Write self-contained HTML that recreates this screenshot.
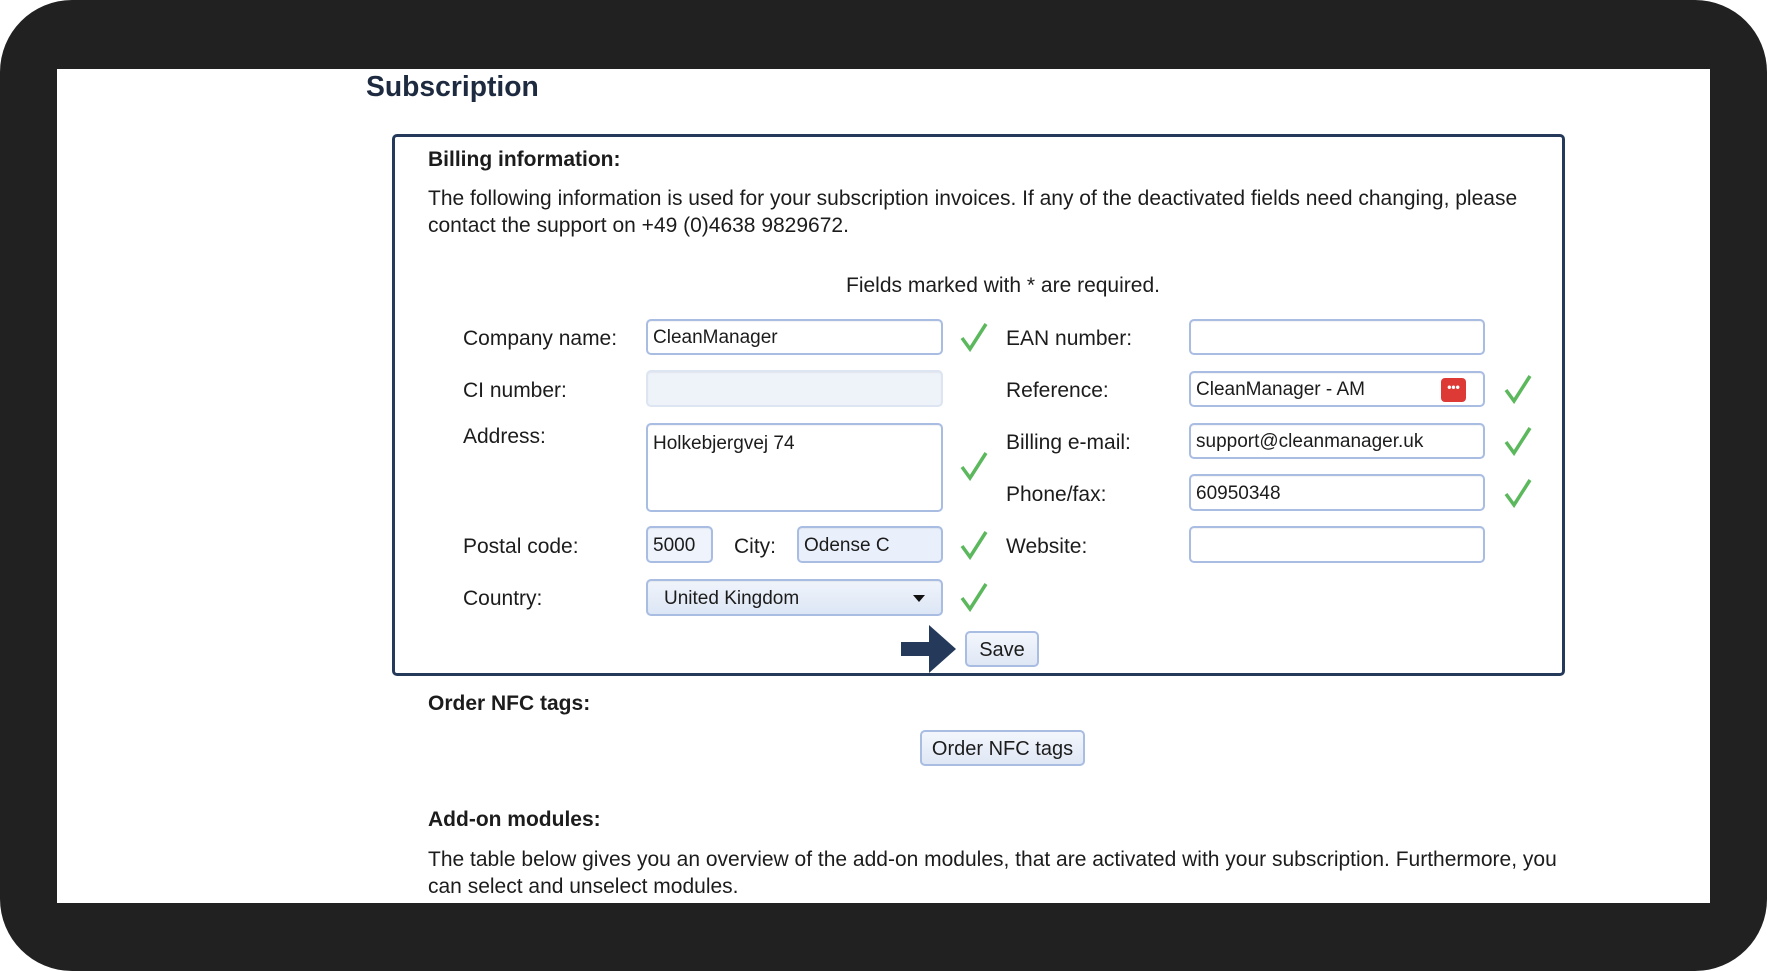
<!DOCTYPE html>
<html><head><meta charset="utf-8"><style>
*{margin:0;padding:0;box-sizing:border-box}
html,body{width:1767px;height:971px;background:#fff;overflow:hidden;font-family:"Liberation Sans",Arial,sans-serif;color:#1c1c1c}
#frame{position:absolute;left:0;top:0;width:1767px;height:971px;background:#222122;border-radius:72px}
#white{position:absolute;left:57px;top:69px;width:1653px;height:834px;background:#fff}
.a{position:absolute;white-space:nowrap}
.t{font-size:21px;transform-origin:left center}
.h{font-weight:bold;font-size:21px;transform-origin:left center}
.in{position:absolute;border:2px solid #a9bde3;border-radius:5px;background:#fff;font-size:19px;padding-left:5px;padding-top:2px;display:flex;align-items:center;box-shadow:inset 0 1px 1px rgba(0,0,0,.05)}
.ck{position:absolute;width:28px;height:30px}
.btn{position:absolute;border:2px solid #a9bde3;border-radius:5px;background:linear-gradient(#f3f6fc,#dfe7f5);font-size:20px;display:flex;align-items:center;justify-content:center;padding-top:2px}
</style></head><body>
<div id="frame"></div>
<div id="white"></div>
<div class="a" style="left:366px;top:71px;font-size:29px;font-weight:bold;color:#1d2a40;transform:scaleX(.975);transform-origin:left">Subscription</div>
<div class="a" style="left:392px;top:134px;width:1173px;height:542px;border:3px solid #253a5a;border-radius:5px"></div>
<div class="a h" style="left:428px;top:148px">Billing information:</div>
<div class="a t" style="left:428px;top:187px">The following information is used for your subscription invoices. If any of the deactivated fields need changing, please</div>
<div class="a t" style="left:428px;top:214px">contact the support on +49 (0)4638 9829672.</div>
<div class="a t" style="left:846px;top:274px">Fields marked with * are required.</div>

<div class="a t" style="left:463px;top:327px">Company name:</div>
<div class="a t" style="left:463px;top:379px">CI number:</div>
<div class="a t" style="left:463px;top:425px">Address:</div>
<div class="a t" style="left:463px;top:535px">Postal code:</div>
<div class="a t" style="left:734px;top:535px">City:</div>
<div class="a t" style="left:463px;top:587px">Country:</div>
<div class="a t" style="left:1006px;top:327px">EAN number:</div>
<div class="a t" style="left:1006px;top:379px">Reference:</div>
<div class="a t" style="left:1006px;top:431px">Billing e-mail:</div>
<div class="a t" style="left:1006px;top:483px">Phone/fax:</div>
<div class="a t" style="left:1006px;top:535px">Website:</div>

<div class="in" style="left:646px;top:319px;width:297px;height:36px">CleanManager</div>
<div class="in" style="left:646px;top:370px;width:297px;height:37px;background:#eef2f9;border-color:#dde5f2"></div>
<div class="in" style="left:646px;top:423px;width:297px;height:89px;align-items:flex-start;padding-top:8px">Holkebjergvej 74</div>
<div class="in" style="left:646px;top:526px;width:67px;height:37px;background:#eef3fc">5000</div>
<div class="in" style="left:797px;top:526px;width:146px;height:37px;background:#eaf0fb">Odense C</div>
<div class="in" style="left:646px;top:579px;width:297px;height:37px;background:linear-gradient(#f0f4fb,#dce6f5);padding-left:16px">United Kingdom<span style="position:absolute;left:265px;top:14px;border-left:6px solid transparent;border-right:6px solid transparent;border-top:7px solid #111"></span></div>
<div class="in" style="left:1189px;top:319px;width:296px;height:36px"></div>
<div class="in" style="left:1189px;top:371px;width:296px;height:36px">CleanManager - AM<span style="position:absolute;left:250px;top:5px;width:25px;height:24px;background:#dd3a36;border-radius:4px;color:#fff;font-size:12px;font-weight:bold;text-align:center;line-height:18px">•••</span></div>
<div class="in" style="left:1189px;top:423px;width:296px;height:36px">support@cleanmanager.uk</div>
<div class="in" style="left:1189px;top:474px;width:296px;height:37px">60950348</div>
<div class="in" style="left:1189px;top:526px;width:296px;height:37px"></div>

<svg class="ck" style="left:960px;top:322px" viewBox="0 0 28 30"><path d="M2 16 L10 27 L26 2" fill="none" stroke="#5cb85c" stroke-width="3.5"/></svg>
<svg class="ck" style="left:960px;top:451px" viewBox="0 0 28 30"><path d="M2 16 L10 27 L26 2" fill="none" stroke="#5cb85c" stroke-width="3.5"/></svg>
<svg class="ck" style="left:960px;top:530px" viewBox="0 0 28 30"><path d="M2 16 L10 27 L26 2" fill="none" stroke="#5cb85c" stroke-width="3.5"/></svg>
<svg class="ck" style="left:960px;top:582px" viewBox="0 0 28 30"><path d="M2 16 L10 27 L26 2" fill="none" stroke="#5cb85c" stroke-width="3.5"/></svg>
<svg class="ck" style="left:1504px;top:374px" viewBox="0 0 28 30"><path d="M2 16 L10 27 L26 2" fill="none" stroke="#5cb85c" stroke-width="3.5"/></svg>
<svg class="ck" style="left:1504px;top:426px" viewBox="0 0 28 30"><path d="M2 16 L10 27 L26 2" fill="none" stroke="#5cb85c" stroke-width="3.5"/></svg>
<svg class="ck" style="left:1504px;top:478px" viewBox="0 0 28 30"><path d="M2 16 L10 27 L26 2" fill="none" stroke="#5cb85c" stroke-width="3.5"/></svg>

<svg class="a" style="left:901px;top:625px" width="56" height="48" viewBox="0 0 56 48"><path d="M0 17 H28 V0 L55 24 L28 48 V31 H0 Z" fill="#253a5a"/></svg>
<div class="btn" style="left:965px;top:631px;width:74px;height:36px">Save</div>

<div class="a h" style="left:428px;top:692px">Order NFC tags:</div>
<div class="btn" style="left:920px;top:730px;width:165px;height:36px">Order NFC tags</div>
<div class="a h" style="left:428px;top:808px">Add-on modules:</div>
<div class="a t" style="left:428px;top:848px">The table below gives you an overview of the add-on modules, that are activated with your subscription. Furthermore, you</div>
<div class="a t" style="left:428px;top:875px">can select and unselect modules.</div>
</body></html>
